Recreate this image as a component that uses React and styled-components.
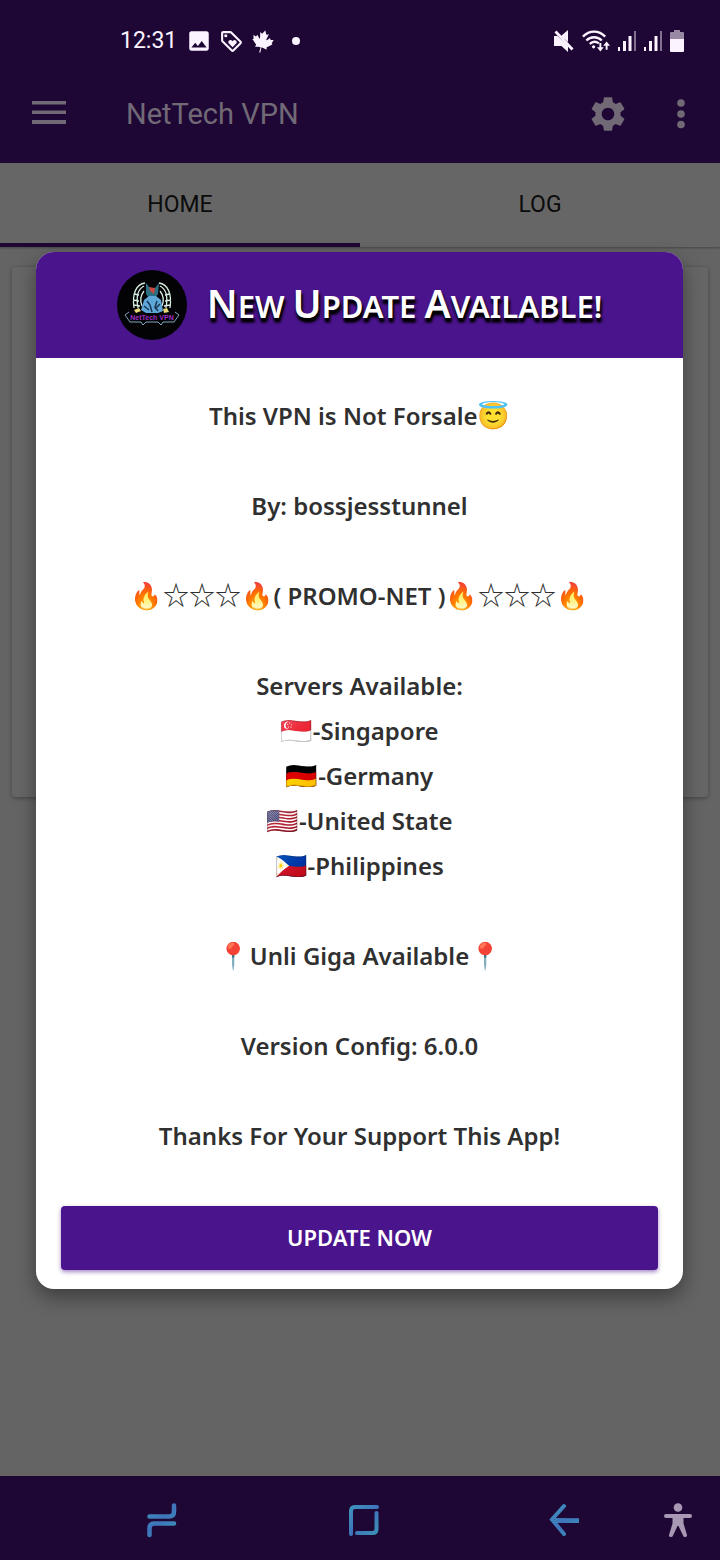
import React from "react";
import styled, { createGlobalStyle } from "styled-components";
import { MdImage, MdOutlineLoyalty, MdSettings } from "react-icons/md";
import { FaCanadianMapleLeaf } from "react-icons/fa";

const GlobalStyle = createGlobalStyle`
  * { box-sizing: border-box; }
  body { margin: 0; background: #666666; font-family: Roboto, "Liberation Sans", sans-serif; }
  button { font: inherit; border: 0; margin: 0; padding: 0; background: none; cursor: pointer; }
  svg { display: block; flex: none; }
`;

const Screen = styled.div`
  display: grid;
  grid-template-rows: 64px 1fr 84px;
  min-height: 100vh;
`;

const StatusBar = styled.header`
  display: flex;
  align-items: center;
  justify-content: space-between;
  padding: 18px 36px 0 120px;
  background: #1f0735;
  color: #fbf3ff;
`;

const StatusGroup = styled.div`
  display: flex;
  align-items: center;
  gap: ${(p) => p.$gap}px;
`;

const Clock = styled.time`
  font-size: 23px;
  line-height: 32px;
  margin-right: 2px;
`;

const Leaf = styled(FaCanadianMapleLeaf)`
  transform: rotate(14deg);
`;

const Dot = styled.span`
  width: 8px;
  height: 8px;
  margin-left: 11px;
  border-radius: 50%;
  background: currentColor;
`;

const Stage = styled.div`
  display: grid;
  grid-template-columns: minmax(0, 1fr);
  > * { grid-area: 1 / 1; }
`;

const Page = styled.div`
  display: flex;
  flex-direction: column;
  background: #646464;
`;

const AppBar = styled.div`
  display: flex;
  align-items: center;
  height: 99px;
  padding: 0 35px 0 32px;
  background: #1f0735;
  color: #716a76;
`;

const AppTitle = styled.h1`
  flex: 1;
  margin: 0 0 0 60px;
  font-size: 29px;
  line-height: 40px;
  font-weight: 400;
`;

const IconButton = styled.button`
  display: grid;
  place-items: center;
  color: inherit;
  margin-left: ${(p) => p.$gap || 0}px;
`;

const Tabs = styled.nav`
  display: grid;
  grid-template-columns: 1fr 1fr;
  height: 84px;
  background: #666666;
  box-shadow: 0 1px 2px rgba(0, 0, 0, 0.3);
`;

const Tab = styled.button`
  color: #0b0b0b;
  font-size: 23px;
  line-height: 32px;
  border-bottom: 4px solid ${(p) => (p.$active ? "#1f0735" : "transparent")};
  padding-top: 4px;
`;

const Card = styled.div`
  height: 530px;
  margin: 20px 12px 0;
  border-radius: 4px;
  background: #666666;
  box-shadow: 0 1px 4px rgba(0, 0, 0, 0.35);
`;

const Overlay = styled.div`
  display: flex;
  align-items: center;
  padding: 0 37px 0 36px;
`;

const Dialog = styled.section`
  flex: 1;
  border-radius: 18px;
  overflow: hidden;
  background: #ffffff;
  box-shadow: 0 8px 20px rgba(0, 0, 0, 0.4);
`;

const DialogHeader = styled.div`
  display: flex;
  align-items: center;
  justify-content: center;
  gap: 20px;
  height: 106px;
  background: #4a148c;
`;

const DialogTitle = styled.h2`
  margin: 0;
  color: #ffffff;
  font-family: "Noto Sans", sans-serif;
  font-size: 31px;
  line-height: 48px;
  font-weight: 600;
  text-transform: uppercase;
  text-shadow: 1px 4px 3px #000000, 1px 4px 3px #000000;
  white-space: nowrap;
`;

const Initial = styled.span`
  font-size: 39px;
`;

const Message = styled.div`
  padding: 35px 24px 48px;
  color: #303030;
  font-family: "Noto Sans", sans-serif;
  font-size: 24px;
  line-height: 45px;
  font-weight: 600;
  text-align: center;
  white-space: nowrap;
`;

const Line = styled.p`
  height: 45px;
  margin: 0 0 ${(p) => (p.$spaced ? 45 : 0)}px;
`;

const Symbol = styled.span`
  font-family: "Noto Sans CJK JP", "Noto Color Emoji", sans-serif;
  font-size: 26px;
  line-height: 32px;
  font-weight: 400;
`;

const UpdateButton = styled.button`
  display: block;
  width: calc(100% - 50px);
  height: 64px;
  && { margin: 0 25px 19px; padding-bottom: 2px; background: #4a148c; }
  border-radius: 4px;
  color: #ffffff;
  font-family: "Noto Sans", sans-serif;
  font-size: 22px;
  font-weight: 600;
  box-shadow: 0 2px 4px rgba(74, 20, 140, 0.5);
`;

const NavBar = styled.nav`
  display: flex;
  align-items: center;
  gap: 84px;
  padding: 4px 28px 0 145px;
  background: #1f0735;
  color: #a898b4;
`;

const NavKeys = styled.div`
  display: flex;
  flex: 1;
  align-items: center;
  justify-content: space-between;
`;

const MenuIcon = () => (
  <svg width="34" height="26" viewBox="0 0 34 26" fill="currentColor">
    <path d="M0 0h34v3.500H0zM0 9.500h34V13H0zM0 19h34v4H0z" />
  </svg>
);

const MoreIcon = () => (
  <svg width="8" height="30" viewBox="0 0 8 30" fill="currentColor">
    <circle cx="4" cy="4" r="3.800" />
    <circle cx="4" cy="15" r="3.800" />
    <circle cx="4" cy="25.500" r="3.800" />
  </svg>
);

const MuteIcon = () => (
  <svg width="20" height="22" viewBox="0 0 20 22" fill="currentColor">
    <path d="M14 0v12L7 6zM0 6h3.500L14 16v6l-6.500-6H0z" />
    <path d="M1.500 1.500l17 18" stroke="currentColor" strokeWidth="2.800" />
  </svg>
);

const WifiIcon = () => (
  <svg width="28" height="22" viewBox="0 0 29 22" fill="none" stroke="currentColor" strokeWidth="2.4">
    <path d="M1 6.5C7.500-.5 17.500-.5 24 6.500M4.500 10.500c4.500-4.500 11.500-4.500 16 0M8 14c3-2.800 6.500-2.800 9.500-.5" />
    <circle cx="12" cy="17" r="1.700" fill="currentColor" stroke="none" />
    <path d="M19 13v7M25.500 20v-6" strokeWidth="2" />
    <path d="M15.500 17.500h7L19 22zM22 16h7l-3.500-4.500z" fill="currentColor" stroke="none" />
  </svg>
);

const SignalIcon = () => (
  <svg width="18" height="20" viewBox="0 0 18 20" fill="currentColor">
    <path d="M0 16h2v4H0zM5 10h3v10H5zM10.500 5h3v15h-3z" />
    <path d="M16 0h2v20h-2z" opacity=".45" />
  </svg>
);

const BatteryIcon = () => (
  <svg width="14" height="22" viewBox="0 0 14 22" fill="currentColor">
    <path d="M4 0h6v2h3q1 0 1 1v6H0V3q0-1 1-1h3z" opacity=".55" />
    <path d="M0 9h14v12q0 1-1 1H1q-1 0-1-1z" />
  </svg>
);

const NavGradient = ({ id }) => (
  <linearGradient id={id} gradientUnits="userSpaceOnUse" x1="0" y1="0" x2="32" y2="34">
    <stop offset="0" stopColor="#3d9bbd" />
    <stop offset=".5" stopColor="#3f74bb" />
    <stop offset="1" stopColor="#3a98b6" />
  </linearGradient>
);

const RecentsIcon = () => (
  <svg width="34" height="36" viewBox="0 0 34 36" fill="none" stroke="url(#recents)" strokeWidth="4.500" strokeLinecap="round">
    <defs><NavGradient id="recents" /></defs>
    <path d="M4.500 14.500H24q5 0 5-5V3.500M29 21.500H9.500q-5 0-5 5V33" />
  </svg>
);

const HomeIcon = () => (
  <svg width="32" height="34" viewBox="0 0 32 34" fill="none" stroke="url(#home)" strokeWidth="4" strokeLinecap="round">
    <defs><NavGradient id="home" /></defs>
    <path d="M3 31V8q0-4 4-4h22M28.500 10v16q0 4-4 4H9" />
  </svg>
);

const BackIcon = () => (
  <svg width="31" height="34" viewBox="0 0 31 34" fill="none" stroke="url(#back)" strokeWidth="4" strokeLinecap="round">
    <defs><NavGradient id="back" /></defs>
    <path d="M15 3L3 16.500 15 31" />
    <path d="M6 17.500L30 17.600" strokeWidth="4.800" strokeLinecap="butt" />
  </svg>
);

const PersonIcon = () => (
  <svg width="28" height="34" viewBox="0 0 28 34" fill="currentColor">
    <circle cx="14" cy="4.500" r="4.300" />
    <path d="M2 11h24q2 0 2 2t-2 2h-6.500v5.500L23 32q.3 2-2 2-1.500 0-2-1.500L14.500 23h-1L9 32.500Q8.500 34 7 34q-2.300 0-2-2l3.500-11.500V15H2q-2 0-2-2t2-2z" />
  </svg>
);

const Logo = () => (
  <svg width="70" height="70" viewBox="0 0 70 70" role="img" aria-label="NetTech VPN logo">
    <circle cx="35" cy="35" r="35" fill="#030305" />
    <g fill="none" stroke="#d9efe2" strokeWidth="1.300">
      <path d="M28 13C19 14 15 24 17 38M27 16c-6 3-8 11-6 22M27 21c-4 5-4 10-2 15M17 24l5 1M16 30l6 1M17 35l6 1" />
      <path d="M42 13c9 1 13 11 11 25M43 16c6 3 8 11 6 22M43 21c4 5 4 10 2 15M53 24l-5 1M54 30l-6 1M53 35l-6 1" />
    </g>
    <path d="M29 13l4 5h5l4-5-1 11-3 4h-6l-3-4z" fill="#2c6f83" />
    <path d="M32 17l6 1-1 6-4-3z" fill="#c8463f" />
    <path d="M27 30l5-4h7l5 4 2 11-5 2H29l-5-3z" fill="#5fa7d9" />
    <path d="M30 31l3 4 2 7M40 31l-2 6 3 4M27 36l5 4M43 34l-5 5" stroke="#17354e" strokeWidth="1.500" fill="none" />
    <path d="M17 40l5-2 2 3-5 2zM46 39l4-1 2 4-5 1z" fill="#e5d77a" />
    <path d="M12 42l-4 3 5 7h11l2 3 3-3h12l3 3 2-3h11l5-7-4-3" stroke="#7fa6c4" strokeWidth="1" fill="none" />
    <text x="35" y="50" textAnchor="middle" fontSize="7" fontWeight="700" fontFamily="Liberation Sans, sans-serif" fill="#a02fc4">NetTech VPN</text>
  </svg>
);

export default function App() {
  return (
    <Screen>
      <GlobalStyle />
      <StatusBar>
        <StatusGroup $gap={7}>
          <Clock>12:31</Clock>
          <MdImage size={26} />
          <MdOutlineLoyalty size={25} />
          <Leaf size={23} />
          <Dot />
        </StatusGroup>
        <StatusGroup $gap={8}>
          <MuteIcon />
          <WifiIcon />
          <SignalIcon />
          <SignalIcon />
          <BatteryIcon />
        </StatusGroup>
      </StatusBar>
      <Stage>
        <Page>
          <AppBar>
            <IconButton aria-label="Menu"><MenuIcon /></IconButton>
            <AppTitle>NetTech VPN</AppTitle>
            <IconButton aria-label="Settings"><MdSettings size={42} /></IconButton>
            <IconButton aria-label="More options" $gap={48}><MoreIcon /></IconButton>
          </AppBar>
          <Tabs>
            <Tab $active>HOME</Tab>
            <Tab>LOG</Tab>
          </Tabs>
          <Card />
        </Page>
        <Overlay>
          <Dialog role="dialog" aria-labelledby="update-title">
            <DialogHeader>
              <Logo />
              <DialogTitle id="update-title">
                <Initial>N</Initial>ew <Initial>U</Initial>pdate <Initial>A</Initial>vailable!
              </DialogTitle>
            </DialogHeader>
            <Message>
              <Line $spaced>This VPN is Not Forsale<Symbol>😇</Symbol></Line>
              <Line $spaced>By: bossjesstunnel</Line>
              <Line $spaced>
                <Symbol>🔥☆☆☆🔥</Symbol>( PROMO-NET )<Symbol>🔥☆☆☆🔥</Symbol>
              </Line>
              <Line>Servers Available:</Line>
              <Line><Symbol>🇸🇬</Symbol>-Singapore</Line>
              <Line><Symbol>🇩🇪</Symbol>-Germany</Line>
              <Line><Symbol>🇺🇸</Symbol>-United State</Line>
              <Line $spaced><Symbol>🇵🇭</Symbol>-Philippines</Line>
              <Line $spaced><Symbol>📍</Symbol>Unli Giga Available<Symbol>📍</Symbol></Line>
              <Line $spaced>Version Config: 6.0.0</Line>
              <Line>Thanks For Your Support This App!</Line>
            </Message>
            <UpdateButton>UPDATE NOW</UpdateButton>
          </Dialog>
        </Overlay>
      </Stage>
      <NavBar>
        <NavKeys>
          <IconButton aria-label="Recent apps"><RecentsIcon /></IconButton>
          <IconButton aria-label="Home"><HomeIcon /></IconButton>
          <IconButton aria-label="Back"><BackIcon /></IconButton>
        </NavKeys>
        <IconButton aria-label="Accessibility"><PersonIcon /></IconButton>
      </NavBar>
    </Screen>
  );
}
